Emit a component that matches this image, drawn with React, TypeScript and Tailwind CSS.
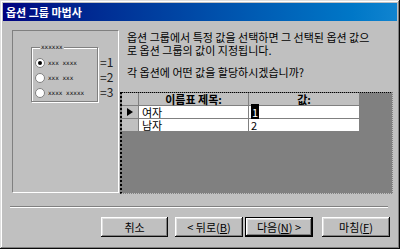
import React from 'react';

const raised =
  'shadow-[inset_-1px_-1px_#0a0a0a,inset_1px_1px_#ffffff,inset_-2px_-2px_#808080,inset_2px_2px_#dfdfdf]';

const options = [
  { label: 'xxx xxxx', value: '=1', checked: true },
  { label: 'xxx xxx', value: '=2', checked: false },
  { label: 'xxxx xxxxx', value: '=3', checked: false },
];

const rows = [
  { name: '여자', value: '1', current: true },
  { name: '남자', value: '2', current: false },
];

const Button: React.FC<{ width: string; isDefault?: boolean; children: React.ReactNode }> = ({
  width,
  isDefault,
  children,
}) => (
  <div className={`${width} h-[20px] ${isDefault ? 'border border-black' : ''}`}>
    <div className={`w-full h-full bg-[#c0c0c0] ${raised} flex items-center justify-center text-[11px] text-black`}>
      {children}
    </div>
  </div>
);

const App: React.FC = () => {
  return (
    <div className="w-[400px] h-[249px] bg-[#c0c0c0] p-[3px] flex flex-col font-['Noto_Sans_CJK_KR',sans-serif] shadow-[inset_-1px_-1px_#0a0a0a,inset_1px_1px_#dfdfdf,inset_-2px_-2px_#808080,inset_2px_2px_#ffffff] overflow-hidden">
      {/* Title bar */}
      <div className="h-[18px] bg-gradient-to-r from-[#000080] to-[#1084d0] flex items-center pl-[3px]">
        <span className="text-white font-bold text-[11px] leading-none">옵션 그룹 마법사</span>
      </div>

      {/* Body */}
      <div className="flex mt-[9px] ml-[9px]">
        {/* Left picture */}
        <div className="w-[107px] h-[163px] border-t border-l border-t-[#808080] border-l-[#808080] border-r border-b border-r-white border-b-white">
          <div className="flex mt-[16px] ml-[18px]">
            <div className="relative w-[67px] h-[55px] border border-[#808080] shadow-[inset_1px_1px_#ffffff,1px_1px_#ffffff] pt-[7px] pl-[3px]">
              <span className="absolute left-[8px] top-[-5px] px-[1px] bg-[#c0c0c0] font-['DejaVu_Sans_Mono',monospace] text-[6px] leading-[8px] text-black">
                xxxxxx
              </span>
              {options.map((o) => (
                <div key={o.value} className="h-[15px] flex items-center">
                  <div className="w-[10px] h-[10px] rounded-full bg-white border border-[#808080] flex items-center justify-center">
                    {o.checked && <div className="w-[4px] h-[4px] rounded-full bg-black" />}
                  </div>
                  <span className="ml-[3px] font-['DejaVu_Sans_Mono',monospace] text-[6px] leading-none text-black whitespace-nowrap">
                    {o.label}
                  </span>
                </div>
              ))}
            </div>
            <div className="flex flex-col pt-[7px] ml-[2px]">
              {options.map((o) => (
                <div key={o.value} className="h-[15px] flex items-center text-[12px] text-[#202020] leading-none">
                  {o.value}
                </div>
              ))}
            </div>
          </div>
        </div>

        {/* Right column */}
        <div className="ml-[1px] w-[273px] flex flex-col">
          <div className="pl-[7px] mt-[1px] text-[11px] leading-[13px] text-black whitespace-nowrap">
            <p>
              옵션 그룹에서 특정 값을 선택하면 그 선택된 옵션 값으
              <br />
              로 옵션 그룹의 값이 지정됩니다.
            </p>
            <p className="mt-[9px]">각 옵션에 어떤 값을 할당하시겠습니까?</p>
          </div>

          {/* Grid */}
          <div className="mt-[13px] h-[102px] bg-[#808080] border-t border-t-black border-l-2 border-l-black border-r border-r-[#c0c0c0] border-dotted border-b border-b-[#c0c0c0]">
            <div className="flex h-[13px] text-[11px] leading-[12px] font-bold">
              <div className={`w-[17px] bg-[#c0c0c0] border-r border-b border-[#808080]`} />
              <div className="w-[110px] bg-[#c0c0c0] border-r border-b border-[#808080] text-center">이름표 제목:</div>
              <div className="w-[111px] bg-[#c0c0c0] border-r border-b border-[#808080] text-center">값:</div>
            </div>
            {rows.map((r) => (
              <div key={r.name} className="flex h-[13px] text-[11px] leading-[12px]">
                <div className="w-[17px] bg-[#c0c0c0] border-r border-b border-[#808080] flex items-center justify-center">
                  {r.current && (
                    <div className="w-0 h-0 border-y-[4px] border-y-transparent border-l-[6px] border-l-black" />
                  )}
                </div>
                <div className="w-[110px] bg-white border-r border-b border-[#808080] pl-[3px]">{r.name}</div>
                <div className="w-[111px] bg-white border-r border-b border-[#808080] pl-[2px]">
                  {r.current ? <span className="bg-black text-white px-[1px]">{r.value}</span> : r.value}
                </div>
              </div>
            ))}
          </div>
        </div>
      </div>

      {/* Separator */}
      <div className="mt-[12px] ml-[7px] w-[378px] h-[2px] border-t border-t-[#808080] border-b border-b-white" />

      {/* Buttons */}
      <div className="flex mt-[9px] ml-[98px]">
        <Button width="w-[67px]">취소</Button>
        <div className="ml-[7px]">
          <Button width="w-[68px]">
            &lt; 뒤로(<span className="underline">B</span>)
          </Button>
        </div>
        <div className="ml-[2px]">
          <Button width="w-[68px]" isDefault>
            다음(<span className="underline">N</span>) &gt;
          </Button>
        </div>
        <div className="ml-[9px]">
          <Button width="w-[68px]">
            마침(<span className="underline">F</span>)
          </Button>
        </div>
      </div>
    </div>
  );
};

export default App;
